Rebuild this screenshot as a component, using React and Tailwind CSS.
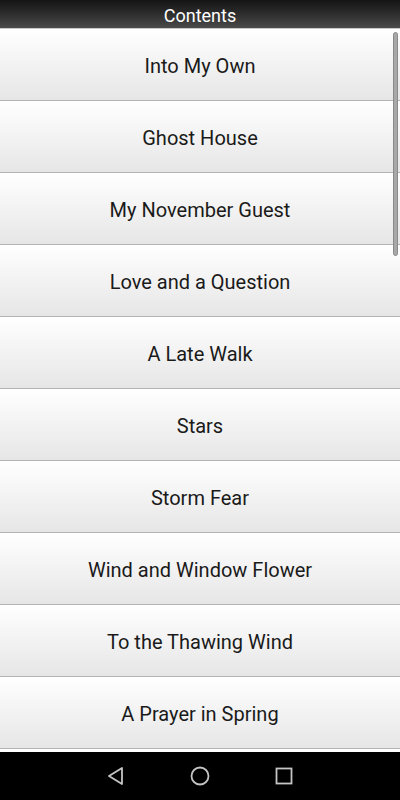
import React from "react";

const poems = [
  "Into My Own",
  "Ghost House",
  "My November Guest",
  "Love and a Question",
  "A Late Walk",
  "Stars",
  "Storm Fear",
  "Wind and Window Flower",
  "To the Thawing Wind",
  "A Prayer in Spring",
];

export default function App() {
  return (
    <div
      className="w-[400px] h-[800px] flex flex-col bg-white overflow-hidden"
      style={{ fontFamily: "Roboto, 'Noto Sans', sans-serif" }}
    >
      {/* title bar */}
      <div className="h-[29px] shrink-0 flex items-center justify-center pt-[2px] bg-gradient-to-b from-[#141414] to-[#4a4a4a] text-white text-[18px] border-b border-[#c8c8c8]">
        Contents
      </div>

      {/* list */}
      <div className="relative flex-1 flex flex-col overflow-hidden">
        {poems.map((title) => (
          <div
            key={title}
            className="h-[72px] shrink-0 flex items-center justify-center pt-[3px] bg-gradient-to-b from-white to-[#e6e6e6] border-b border-[#b4b4b4] text-[20px] text-[#1a1a1a]"
          >
            {title}
          </div>
        ))}
        <div className="absolute right-[2px] top-[3px] w-[5px] h-[224px] rounded-full bg-[#a8a8a8] border border-[#8a8a8a]" />
      </div>

      {/* nav bar */}
      <div className="h-[48px] shrink-0 bg-black flex items-center justify-center gap-[65px]">
        <svg width="18" height="20" viewBox="0 0 18 20" fill="none" stroke="#c4c4c4" strokeWidth="1.8" strokeLinejoin="round">
          <path d="M15 2 L2 10 L15 18 Z" />
        </svg>
        <svg width="20" height="20" viewBox="0 0 20 20" fill="none" stroke="#c4c4c4" strokeWidth="1.8">
          <circle cx="10" cy="10" r="8.5" />
        </svg>
        <svg width="18" height="18" viewBox="0 0 18 18" fill="none" stroke="#c4c4c4" strokeWidth="1.8">
          <rect x="1.5" y="1.5" width="15" height="15" />
        </svg>
      </div>
    </div>
  );
}
